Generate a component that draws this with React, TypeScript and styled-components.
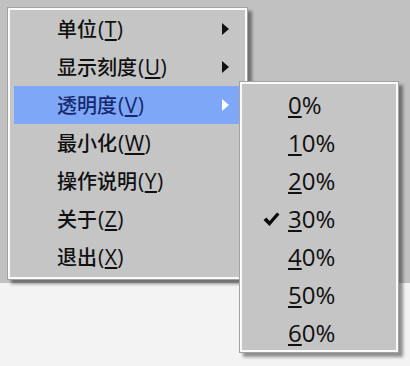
import React from 'react';
import styled, { createGlobalStyle } from 'styled-components';

const GlobalStyle = createGlobalStyle`
  html, body {
    margin: 0;
    padding: 0;
  }
  body {
    width: 410px;
    height: 366px;
    overflow: hidden;
    background: linear-gradient(#c1c1c1 0 283px, #f3f3f3 283px);
    font-family: "Open Sans", "Noto Sans CJK SC", sans-serif;
    color: #101010;
  }
`;

const Stage = styled.div`
  position: relative;
  width: 410px;
  height: 366px;
  padding: 7px;
  box-sizing: border-box;
`;

const MenuBox = styled.div`
  box-sizing: border-box;
  background: #c5c5c5;
  border: 1px solid #a2a2a2;
  box-shadow: inset 0 0 0 2px #fbfbfb, 4px 4px 3px rgba(0, 0, 0, 0.42);
  display: flex;
  flex-direction: column;
`;

const MainMenu = styled(MenuBox)`
  width: 241px;
  height: 273px;
  padding: 2px 7px 0 6px;
`;

const SubMenu = styled(MenuBox)`
  position: absolute;
  left: 239px;
  top: 81px;
  width: 160px;
  height: 272px;
  padding: 4px 6px 0 6px;
`;

const Row = styled.div<{ $active?: boolean }>`
  height: 38px;
  flex: none;
  display: flex;
  align-items: center;
  position: relative;
  background: ${p => (p.$active ? '#7ea8f7' : 'transparent')};
  color: ${p => (p.$active ? '#17296e' : '#101010')};
`;

const Label = styled.span<{ $indent: number }>`
  padding-left: ${p => p.$indent}px;
  font-size: 20px;
  line-height: 1;
  white-space: nowrap;
  font-weight: 500;
`;

const Latin = styled.span`
  font-size: 21px;
  font-weight: 400;
  letter-spacing: 0.5px;
  margin-left: 1px;
`;

const Key = styled.span`
  text-decoration: underline;
  text-underline-offset: 2px;
  text-decoration-thickness: 1.5px;
`;

const Percent = styled.span`
  font-size: 24px;
  font-weight: 400;
  line-height: 1;
`;

const Arrow = styled.span<{ $light?: boolean }>`
  position: absolute;
  right: 11px;
  top: 50%;
  margin-top: -6px;
  width: 0;
  height: 0;
  border-top: 6px solid transparent;
  border-bottom: 6px solid transparent;
  border-left: 7px solid ${p => (p.$light ? '#ffffff' : '#111111')};
`;

const Check = styled.svg`
  position: absolute;
  left: 17px;
  top: 50%;
  margin-top: -7px;
`;

const mainItems = [
  { text: '单位', key: 'T', sub: true },
  { text: '显示刻度', key: 'U', sub: true },
  { text: '透明度', key: 'V', sub: true, active: true },
  { text: '最小化', key: 'W' },
  { text: '操作说明', key: 'Y' },
  { text: '关于', key: 'Z' },
  { text: '退出', key: 'X' },
];

const levels = ['0', '10', '20', '30', '40', '50', '60'];

export default function App() {
  return (
    <Stage>
      <GlobalStyle />
      <MainMenu>
        {mainItems.map(it => (
          <Row key={it.key} $active={it.active}>
            <Label $indent={43}>
              {it.text}
              <Latin>
                (<Key>{it.key}</Key>)
              </Latin>
            </Label>
            {it.sub && <Arrow $light={it.active} />}
          </Row>
        ))}
      </MainMenu>
      <SubMenu>
        {levels.map(l => (
          <Row key={l}>
            {l === '30' && (
              <Check width="17" height="15" viewBox="0 0 17 15">
                <path d="M0.5 8 L3.5 5.5 L6.5 9 L14 0.5 L16.5 2.5 L6.5 14 Z" fill="#0a0a0a" />
              </Check>
            )}
            <Label $indent={42}>
              <Percent>
                <Key>{l[0]}</Key>
                {l.slice(1)}%
              </Percent>
            </Label>
          </Row>
        ))}
      </SubMenu>
    </Stage>
  );
}
